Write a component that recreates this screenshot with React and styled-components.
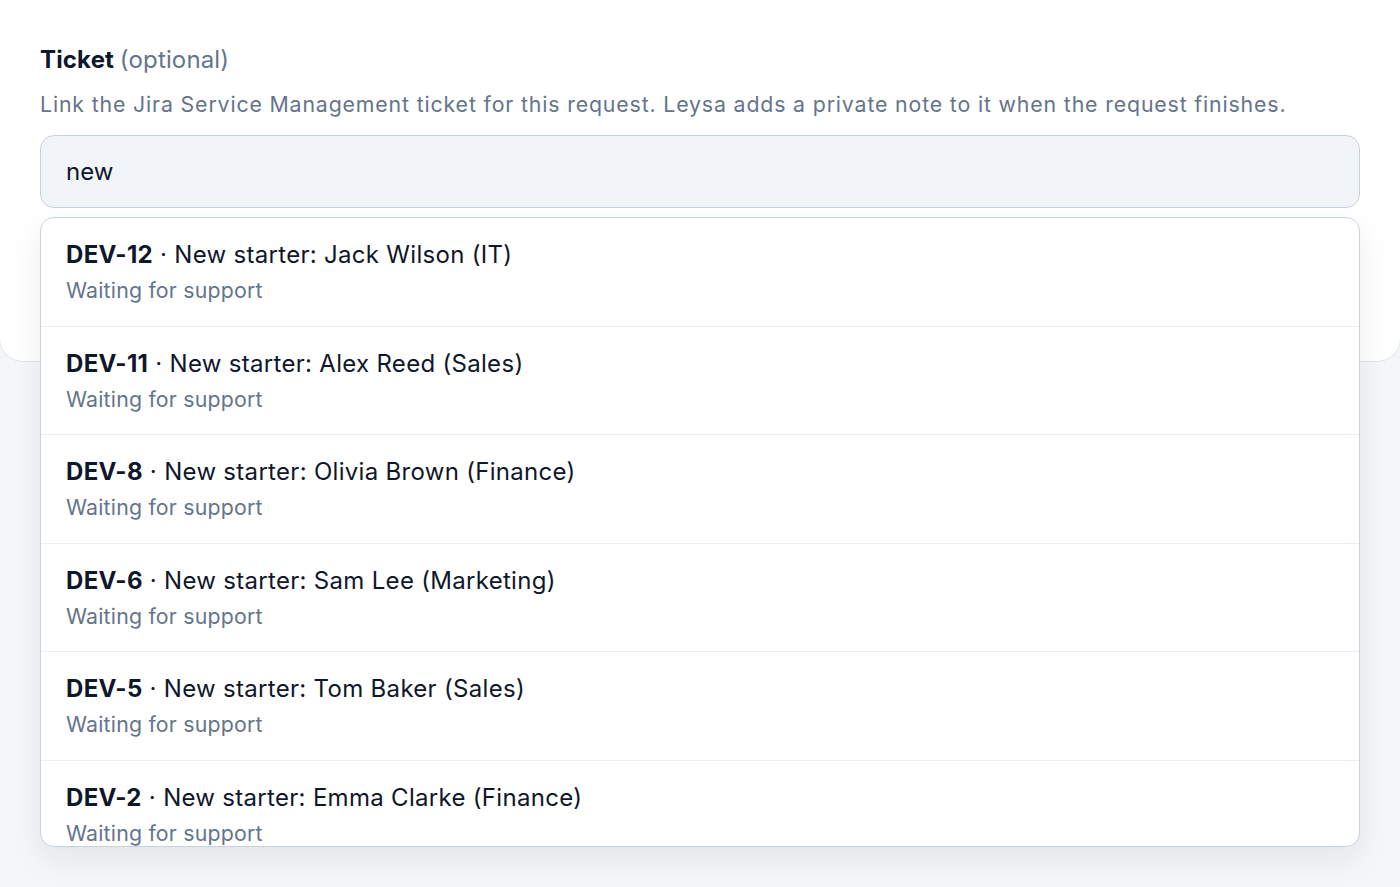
import styled, { createGlobalStyle } from "styled-components";

const tickets = [
  { key: "DEV-12", summary: "New starter: Jack Wilson (IT)", status: "Waiting for support" },
  { key: "DEV-11", summary: "New starter: Alex Reed (Sales)", status: "Waiting for support" },
  { key: "DEV-8", summary: "New starter: Olivia Brown (Finance)", status: "Waiting for support" },
  { key: "DEV-6", summary: "New starter: Sam Lee (Marketing)", status: "Waiting for support" },
  { key: "DEV-5", summary: "New starter: Tom Baker (Sales)", status: "Waiting for support" },
  { key: "DEV-2", summary: "New starter: Emma Clarke (Finance)", status: "Waiting for support" },
];

export default function App() {
  return (
    <>
      <GlobalStyle />
      <Page>
        <Card>
          <Field>
            <Label>
              Ticket <Optional>(optional)</Optional>
            </Label>
            <Hint>
              Link the Jira Service Management ticket for this request. Leysa
              adds a private note to it when the request finishes.
            </Hint>
            <InputWrap>
              <Input defaultValue="new" />
              <Menu>
                {tickets.map((t) => (
                  <Option key={t.key}>
                    <OptionTitle>
                      <Key>{t.key}</Key> · {t.summary}
                    </OptionTitle>
                    <OptionStatus>{t.status}</OptionStatus>
                  </Option>
                ))}
              </Menu>
            </InputWrap>
          </Field>
        </Card>
      </Page>
    </>
  );
}

const GlobalStyle = createGlobalStyle`
  html, body {
    margin: 0;
    padding: 0;
    background: #f5f6f8;
    font-family: Inter, "Noto Sans", sans-serif;
    color: #0f172a;
  }
  * { box-sizing: border-box; }
`;

const Page = styled.div`
  width: 1400px;
  height: 887px;
  overflow: hidden;
  background: #f5f6f8;
`;

const Card = styled.section`
  background: #fff;
  border: 1px solid #e2e8f0;
  border-top: none;
  border-radius: 0 0 24px 24px;
  height: 362px;
  padding: 44px 40px 0;
  margin: 0 -1px;
`;

const Field = styled.div`
  display: flex;
  flex-direction: column;
`;

const Label = styled.div`
  font-size: 24px;
  line-height: 32px;
  font-weight: 700;
  color: #0f172a;
  letter-spacing: 0.15px;
`;

const Optional = styled.span`
  font-weight: 400;
  color: #64748b;
`;

const Hint = styled.p`
  margin: 13px 0 0;
  font-size: 21.3px;
  line-height: 30px;
  color: #64748b;
  letter-spacing: 0.85px;
`;

const InputWrap = styled.div`
  position: relative;
  margin-top: 16px;
`;

const Input = styled.input`
  display: block;
  width: 100%;
  height: 73px;
  padding: 0 25px;
  border: 1.5px solid #c8d2df;
  border-radius: 14px;
  background: #f1f4f8;
  font: inherit;
  font-size: 24px;
  color: #0f172a;
  outline: none;
`;

const Menu = styled.ul`
  position: absolute;
  top: 82px;
  left: 0;
  right: 0;
  height: 630px;
  margin: 0;
  padding: 0;
  list-style: none;
  overflow: hidden;
  background: #fff;
  border: 1.5px solid #c8d2df;
  border-radius: 14px;
  box-shadow: 0 12px 32px rgba(15, 23, 42, 0.08);
`;

const Option = styled.li`
  padding: 21px 25px 20.5px;
  border-bottom: 1px solid #e9edf3;
  display: flex;
  flex-direction: column;
  gap: 4px;
`;

const OptionTitle = styled.div`
  font-size: 24px;
  line-height: 32px;
  color: #0f172a;
  letter-spacing: 0.3px;
`;

const Key = styled.strong`
  font-weight: 700;
`;

const OptionStatus = styled.div`
  font-size: 21.3px;
  line-height: 30px;
  color: #64748b;
  letter-spacing: 0.2px;
`;
